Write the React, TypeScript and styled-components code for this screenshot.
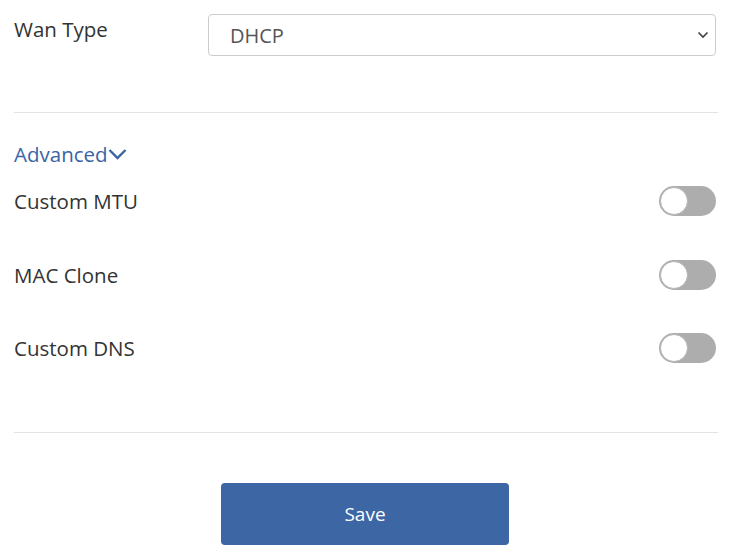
import React from "react";
import styled, { createGlobalStyle } from "styled-components";

const Global = createGlobalStyle`
  html, body { margin: 0; padding: 0; background: #fff; }
  body { font-family: "Open Sans", "Noto Sans", sans-serif; color: #333; }
`;

const Page = styled.div`
  padding: 14px 16px 0 14px;
  display: flex;
  flex-direction: column;
`;

const FieldRow = styled.div`
  display: flex;
  align-items: flex-start;
  height: 42px;
`;

const Label = styled.div<{ $top?: number }>`
  font-size: 20.5px;
  line-height: 26px;
  color: #333;
  padding-top: ${(p) => p.$top ?? 0}px;
`;

const LabelCol = styled(Label)`
  width: 194px;
  flex: none;
`;

const SelectBox = styled.div`
  flex: 1;
  height: 42px;
  box-sizing: border-box;
  border: 1px solid #ccc;
  border-radius: 4px;
  display: flex;
  align-items: center;
  justify-content: space-between;
  padding: 0 6px 0 21px;
  font-size: 20px;
  color: #555;
  margin-right: 2px;
`;

const Divider = styled.div<{ $top: number }>`
  height: 1px;
  background: #e3e3e3;
  margin-top: ${(p) => p.$top}px;
`;

const AdvancedLink = styled.div`
  margin-top: 28px;
  display: flex;
  align-items: center;
  font-size: 20.5px;
  line-height: 26px;
  color: #3a64a4;
`;

const ToggleRow = styled.div<{ $top: number }>`
  display: flex;
  align-items: center;
  justify-content: space-between;
  height: 30px;
  margin-top: ${(p) => p.$top}px;
  margin-right: 2px;
`;

const Track = styled.div`
  width: 57px;
  height: 30px;
  border-radius: 15px;
  background: #adadad;
  position: relative;
  flex: none;
`;

const Knob = styled.div`
  position: absolute;
  left: 1px;
  top: 1px;
  width: 28px;
  height: 28px;
  box-sizing: border-box;
  border-radius: 50%;
  background: #fff;
  border: 1px solid #b5b5b5;
`;

const ButtonWrap = styled.div`
  display: flex;
  justify-content: center;
  margin-top: 50px;
`;

const SaveButton = styled.button`
  width: 288px;
  height: 62px;
  border: none;
  border-radius: 4px;
  background: #3c66a4;
  color: #fff;
  font-family: "Open Sans", "Noto Sans", sans-serif;
  font-size: 19px;
  margin-right: 2px;
`;

const Toggle = () => (
  <Track>
    <Knob />
  </Track>
);

export default function App() {
  return (
    <>
      <Global />
      <Page>
        <FieldRow>
          <LabelCol $top={2}>Wan Type</LabelCol>
          <SelectBox>
            <span>DHCP</span>
            <svg width="12" height="8" viewBox="0 0 12 8">
              <path d="M1.5 1.5l4.5 4.5 4.5-4.5" fill="none" stroke="#444" strokeWidth="1.7" />
            </svg>
          </SelectBox>
        </FieldRow>
        <Divider $top={56} />
        <AdvancedLink>
          Advanced
          <svg width="19" height="12" viewBox="0 0 19 12">
            <path d="M1.5 2l8 8 8-8" fill="none" stroke="#3a64a4" strokeWidth="2.4" />
          </svg>
        </AdvancedLink>
        <ToggleRow $top={19}>
          <Label>Custom MTU</Label>
          <Toggle />
        </ToggleRow>
        <ToggleRow $top={44}>
          <Label>MAC Clone</Label>
          <Toggle />
        </ToggleRow>
        <ToggleRow $top={43}>
          <Label>Custom DNS</Label>
          <Toggle />
        </ToggleRow>
        <Divider $top={69} />
        <ButtonWrap>
          <SaveButton>Save</SaveButton>
        </ButtonWrap>
      </Page>
    </>
  );
}
